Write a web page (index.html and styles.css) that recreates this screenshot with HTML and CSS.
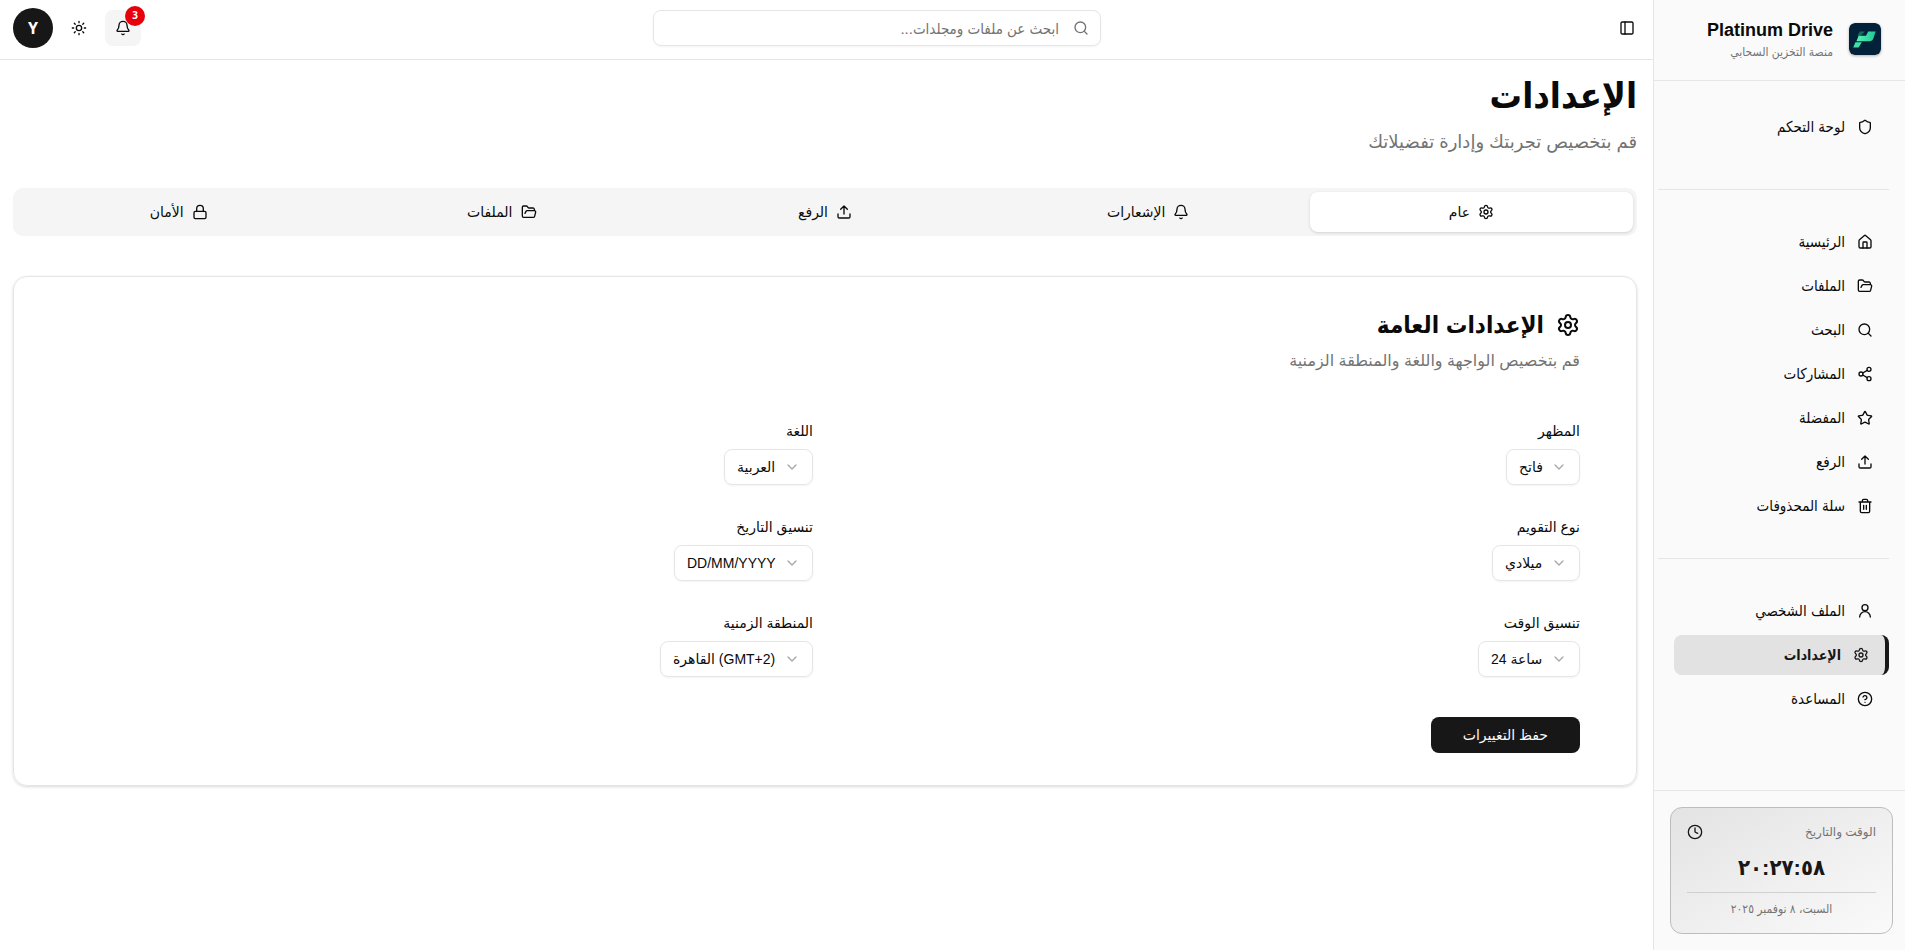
FILE: index.html
```html
<!DOCTYPE html>
<html lang="ar" dir="rtl">
  <head>
    <meta charset="UTF-8">
    <meta name="viewport" content="width=device-width, initial-scale=1.0">
    <title>Platinum Drive</title>
    <link rel="stylesheet" href="styles.css">
  </head>
  <body>
    <svg width="0" height="0" class="sprite">
      <symbol id="i-shield" viewBox="0 0 24 24"><path d="M20 13c0 5-3.500 7.500-7.660 8.950a1 1 0 0 1-.67-.01C7.500 20.500 4 18 4 13V6a1 1 0 0 1 1-1c2 0 4.500-1.200 6.240-2.720a1.170 1.170 0 0 1 1.520 0C14.510 3.810 17 5 19 5a1 1 0 0 1 1 1z"/></symbol>
      <symbol id="i-home" viewBox="0 0 24 24"><path d="M15 21v-8a1 1 0 0 0-1-1h-4a1 1 0 0 0-1 1v8"/><path d="M3 10a2 2 0 0 1 .709-1.528l7-5.999a2 2 0 0 1 2.582 0l7 5.999A2 2 0 0 1 21 10v9a2 2 0 0 1-2 2H5a2 2 0 0 1-2-2z"/></symbol>
      <symbol id="i-folder" viewBox="0 0 24 24"><path d="m6 14 1.500-2.900A2 2 0 0 1 9.240 10H20a2 2 0 0 1 1.940 2.500l-1.540 6a2 2 0 0 1-1.950 1.500H4a2 2 0 0 1-2-2V5a2 2 0 0 1 2-2h3.900a2 2 0 0 1 1.690.9l.81 1.200a2 2 0 0 0 1.670.9H18a2 2 0 0 1 2 2v2"/></symbol>
      <symbol id="i-search" viewBox="0 0 24 24"><circle cx="11" cy="11" r="8"/><path d="m21 21-4.340-4.340"/></symbol>
      <symbol id="i-share" viewBox="0 0 24 24"><circle cx="18" cy="5" r="3"/><circle cx="6" cy="12" r="3"/><circle cx="18" cy="19" r="3"/><path d="m8.590 13.510 6.830 3.980M15.410 6.510l-6.820 3.980"/></symbol>
      <symbol id="i-star" viewBox="0 0 24 24"><path d="M11.525 2.295a.53.53 0 0 1 .95 0l2.310 4.679a2.123 2.123 0 0 0 1.595 1.160l5.166.756a.53.53 0 0 1 .294.904l-3.736 3.638a2.123 2.123 0 0 0-.611 1.878l.882 5.140a.53.53 0 0 1-.771.560l-4.618-2.428a2.122 2.122 0 0 0-1.973 0L6.396 21.010a.53.53 0 0 1-.770-.560l.881-5.139a2.122 2.122 0 0 0-.611-1.879L2.160 9.795a.53.53 0 0 1 .294-.906l5.165-.755a2.122 2.122 0 0 0 1.597-1.160z"/></symbol>
      <symbol id="i-upload" viewBox="0 0 24 24"><path d="M12 3v12M17 8l-5-5-5 5M21 15v4a2 2 0 0 1-2 2H5a2 2 0 0 1-2-2v-4"/></symbol>
      <symbol id="i-trash" viewBox="0 0 24 24"><path d="M10 11v6M14 11v6M19 6v14a2 2 0 0 1-2 2H7a2 2 0 0 1-2-2V6M3 6h18M8 6V4a2 2 0 0 1 2-2h4a2 2 0 0 1 2 2v2"/></symbol>
      <symbol id="i-user" viewBox="0 0 24 24"><circle cx="12" cy="7" r="4.500"/><path d="M20 21a8 8 0 0 0-16 0"/></symbol>
      <symbol id="i-settings" viewBox="0 0 24 24"><path d="M9.671 4.136a2.340 2.340 0 0 1 4.659 0 2.340 2.340 0 0 0 3.319 1.915 2.340 2.340 0 0 1 2.330 4.033 2.340 2.340 0 0 0 0 3.831 2.340 2.340 0 0 1-2.330 4.033 2.340 2.340 0 0 0-3.319 1.915 2.340 2.340 0 0 1-4.659 0 2.340 2.340 0 0 0-3.320-1.915 2.340 2.340 0 0 1-2.330-4.033 2.340 2.340 0 0 0 0-3.831A2.340 2.340 0 0 1 6.350 6.051a2.340 2.340 0 0 0 3.319-1.915"/><circle cx="12" cy="12" r="3"/></symbol>
      <symbol id="i-help" viewBox="0 0 24 24"><circle cx="12" cy="12" r="10"/><path d="M9.090 9a3 3 0 0 1 5.830 1c0 2-3 3-3 3M12 17h.01"/></symbol>
      <symbol id="i-clock" viewBox="0 0 24 24"><circle cx="12" cy="12" r="10"/><path d="M12 6v6l4 2"/></symbol>
      <symbol id="i-bell" viewBox="0 0 24 24"><path d="M10.268 21a2 2 0 0 0 3.464 0M3.262 15.326A1 1 0 0 0 4 17h16a1 1 0 0 0 .740-1.673C19.410 13.956 18 12.499 18 8A6 6 0 0 0 6 8c0 4.499-1.411 5.956-2.738 7.326"/></symbol>
      <symbol id="i-sun" viewBox="0 0 24 24"><circle cx="12" cy="12" r="4"/><path d="M12 2v2M12 20v2M4.930 4.930l1.410 1.410M17.660 17.660l1.410 1.410M2 12h2M20 12h2M6.340 17.660l-1.410 1.410M19.070 4.930l-1.410 1.410"/></symbol>
      <symbol id="i-panel" viewBox="0 0 24 24"><rect x="3" y="3" width="18" height="18" rx="2"/><path d="M9 3v18"/></symbol>
      <symbol id="i-lock" viewBox="0 0 24 24"><rect x="3" y="11" width="18" height="11" rx="2"/><path d="M7 11V7a5 5 0 0 1 10 0v4"/></symbol>
      <symbol id="i-chevron" viewBox="0 0 24 24"><path d="m6 9 6 6 6-6"/></symbol>
    </svg>

    <div class="layout">
      <aside class="sidebar">
        <div class="brand">
          <svg class="logo" viewBox="0 0 30 30">
            <defs>
              <linearGradient id="g" x1="0" y1="0" x2="1" y2="0">
                <stop offset="0" stop-color="#5cf0b4"/>
                <stop offset="1" stop-color="#1fc796"/>
              </linearGradient>
            </defs>
            <rect width="30" height="30" rx="5" fill="#04213a"/>
            <path d="M10 8h5l-4 4H8z" fill="#12695f"/>
            <path d="M18 8h7l-2 6q-1 3-4 3H7l2-5h7z" fill="url(#g)"/>
            <path d="M6 18h6l-3 5H4z" fill="#3fe0a8"/>
          </svg>
          <div class="brand-text">
            <strong>Platinum Drive</strong>
            <span>منصة التخزين السحابي</span>
          </div>
        </div>

        <nav class="menu">
          <ul>
            <li><a href="#"><svg class="icon"><use href="#i-shield"/></svg>لوحة التحكم</a></li>
          </ul>
          <ul>
            <li><a href="#"><svg class="icon"><use href="#i-home"/></svg>الرئيسية</a></li>
            <li><a href="#"><svg class="icon"><use href="#i-folder"/></svg>الملفات</a></li>
            <li><a href="#"><svg class="icon"><use href="#i-search"/></svg>البحث</a></li>
            <li><a href="#"><svg class="icon"><use href="#i-share"/></svg>المشاركات</a></li>
            <li><a href="#"><svg class="icon"><use href="#i-star"/></svg>المفضلة</a></li>
            <li><a href="#"><svg class="icon"><use href="#i-upload"/></svg>الرفع</a></li>
            <li><a href="#"><svg class="icon"><use href="#i-trash"/></svg>سلة المحذوفات</a></li>
          </ul>
          <ul>
            <li><a href="#"><svg class="icon"><use href="#i-user"/></svg>الملف الشخصي</a></li>
            <li><a href="#" class="active"><svg class="icon"><use href="#i-settings"/></svg>الإعدادات</a></li>
            <li><a href="#"><svg class="icon"><use href="#i-help"/></svg>المساعدة</a></li>
          </ul>
        </nav>

        <div class="sidebar-footer">
          <div class="clock">
            <div class="clock-head">
              <span>الوقت والتاريخ</span>
              <svg class="icon"><use href="#i-clock"/></svg>
            </div>
            <div class="clock-time">٢٠:٢٧:٥٨</div>
            <div class="clock-date">السبت، ٨ نوفمبر ٢٠٢٥</div>
          </div>
        </div>
      </aside>

      <div class="page">
        <header class="topbar">
          <button class="icon-btn toggle" aria-label="القائمة"><svg class="icon"><use href="#i-panel"/></svg></button>
          <label class="search">
            <svg class="icon"><use href="#i-search"/></svg>
            <input type="text" placeholder="ابحث عن ملفات ومجلدات..." aria-label="البحث">
          </label>
          <div class="actions">
            <button class="icon-btn bell" aria-label="الإشعارات">
              <svg class="icon"><use href="#i-bell"/></svg>
              <span class="badge">3</span>
            </button>
            <button class="icon-btn" aria-label="المظهر"><svg class="icon"><use href="#i-sun"/></svg></button>
            <button class="avatar">Y</button>
          </div>
        </header>

        <main class="content">
          <h1>الإعدادات</h1>
          <p class="lead">قم بتخصيص تجربتك وإدارة تفضيلاتك</p>

          <div class="tabs" role="tablist">
            <button role="tab" class="selected" aria-selected="true"><svg class="icon"><use href="#i-settings"/></svg>عام</button>
            <button role="tab"><svg class="icon"><use href="#i-bell"/></svg>الإشعارات</button>
            <button role="tab"><svg class="icon"><use href="#i-upload"/></svg>الرفع</button>
            <button role="tab"><svg class="icon"><use href="#i-folder"/></svg>الملفات</button>
            <button role="tab"><svg class="icon"><use href="#i-lock"/></svg>الأمان</button>
          </div>

          <section class="card">
            <h2><svg class="icon"><use href="#i-settings"/></svg>الإعدادات العامة</h2>
            <p class="card-desc">قم بتخصيص الواجهة واللغة والمنطقة الزمنية</p>

            <form class="fields">
              <div class="field">
                <label for="theme">المظهر</label>
                <div class="select">
                  <select id="theme" dir="ltr"><option>فاتح</option></select>
                  <svg class="icon"><use href="#i-chevron"/></svg>
                </div>
              </div>
              <div class="field">
                <label for="lang">اللغة</label>
                <div class="select">
                  <select id="lang" dir="ltr"><option>العربية</option></select>
                  <svg class="icon"><use href="#i-chevron"/></svg>
                </div>
              </div>
              <div class="field">
                <label for="calendar">نوع التقويم</label>
                <div class="select">
                  <select id="calendar" dir="ltr"><option>ميلادي</option></select>
                  <svg class="icon"><use href="#i-chevron"/></svg>
                </div>
              </div>
              <div class="field">
                <label for="date-format">تنسيق التاريخ</label>
                <div class="select">
                  <select id="date-format" dir="ltr"><option>DD/MM/YYYY</option></select>
                  <svg class="icon"><use href="#i-chevron"/></svg>
                </div>
              </div>
              <div class="field">
                <label for="time-format">تنسيق الوقت</label>
                <div class="select">
                  <select id="time-format" dir="ltr"><option>24 ساعة</option></select>
                  <svg class="icon"><use href="#i-chevron"/></svg>
                </div>
              </div>
              <div class="field">
                <label for="timezone">المنطقة الزمنية</label>
                <div class="select">
                  <select id="timezone" dir="ltr"><option>القاهرة (GMT+2)</option></select>
                  <svg class="icon"><use href="#i-chevron"/></svg>
                </div>
              </div>
            </form>

            <button class="save">حفظ التغييرات</button>
          </section>
        </main>
      </div>
    </div>
  </body>
</html>
```

FILE: styles.css
```css
* {
  margin: 0;
  padding: 0;
  box-sizing: border-box;
}

body {
  font-family: "Liberation Sans", "DejaVu Sans", sans-serif;
  font-size: 14px;
  line-height: 20px;
  color: #0a0a0a;
  background-color: #fff;
}

button,
input,
select {
  font: inherit;
  color: inherit;
  border: none;
  background: none;
}

button {
  cursor: pointer;
}

a {
  color: inherit;
  text-decoration: none;
}

h1,
h2,
.brand,
.menu,
.clock-time,
.clock-date,
.search {
  font-family: "Liberation Sans", "DejaVu Sans Condensed", "DejaVu Sans", sans-serif;
}

.sprite {
  position: absolute;
}

.icon {
  width: 16px;
  height: 16px;
  flex-shrink: 0;
  fill: none;
  stroke: currentColor;
  stroke-width: 2;
  stroke-linecap: round;
  stroke-linejoin: round;
}

.layout {
  display: flex;
  min-height: 100vh;
}

/* sidebar */
.sidebar {
  width: 252px;
  flex-shrink: 0;
  display: flex;
  flex-direction: column;
  background-color: #fafafa;
  border-left: 1px solid #e5e5e5;
}

.brand {
  display: flex;
  align-items: center;
  gap: 16px;
  height: 81px;
  padding: 0 24px 2px;
  border-bottom: 1px solid #e5e5e5;
}

.logo {
  width: 32px;
  height: 32px;
  border-radius: 6px;
  box-shadow: 0 1px 3px rgba(0, 0, 0, 0.3);
}

.brand-text {
  display: flex;
  flex-direction: column;
  gap: 2px;
}

.brand-text strong {
  font-size: 18px;
  line-height: 24px;
}

.brand-text span {
  font-size: 12px;
  line-height: 16px;
  color: #737373;
}

.menu {
  flex: 1;
  padding: 0 16px 0 4px;
  font-size: 15px;
}

.menu ul {
  list-style: none;
  display: flex;
  flex-direction: column;
  gap: 4px;
  padding: 32px 0 42px 16px;
}

.menu ul:first-child {
  padding-top: 26px;
}

.menu ul + ul {
  position: relative;
  border-top: 1px solid #e5e5e5;
  padding-bottom: 32px;
}

/* dividers run past the items on the left side */
.menu ul {
  margin-left: 0;
}

.menu a {
  display: flex;
  align-items: center;
  gap: 12px;
  height: 40px;
  padding: 0 16px;
  border-radius: 8px;
}

.menu .active {
  background-color: #e2e2e2;
  border-right: 4px solid #171717;
  color: #171717;
  font-size: 14px;
  font-weight: bold;
}

.sidebar-footer {
  border-top: 1px solid #e5e5e5;
  padding: 16px 12px 16px 16px;
}

.clock {
  padding: 16px;
  border: 1px solid #bdbdbd;
  border-radius: 12px;
  background: linear-gradient(to bottom right, #e3e3e3, #fafafa);
}

.clock-head {
  display: flex;
  align-items: center;
  justify-content: space-between;
  height: 16px;
  font-size: 12px;
  color: #737373;
}

.clock-head .icon {
  color: #171717;
}

.clock-time {
  margin: 12px 0 8px;
  text-align: center;
  font-size: 22px;
  line-height: 32px;
  font-weight: bold;
  color: #171717;
}

.clock-date {
  border-top: 1px solid #d0d0d0;
  padding-top: 8px;
  text-align: center;
  font-size: 12px;
  line-height: 16px;
  color: #737373;
}

/* top bar */
.page {
  flex: 1;
  min-width: 0;
}

.topbar {
  display: flex;
  align-items: center;
  justify-content: space-between;
  height: 60px;
  padding: 0 12px 3px 13px;
  border-bottom: 1px solid #e5e5e5;
}

.icon-btn {
  display: flex;
  align-items: center;
  justify-content: center;
  width: 36px;
  height: 36px;
  border-radius: 8px;
}

.toggle {
  width: 28px;
  height: 28px;
}

.search {
  position: relative;
  width: 448px;
}

.search .icon {
  position: absolute;
  top: 10px;
  right: 12px;
  color: #737373;
}

.search input {
  width: 100%;
  height: 36px;
  padding: 0 41px 0 12px;
  border: 1px solid #e5e5e5;
  border-radius: 8px;
  box-shadow: 0 1px 2px rgba(0, 0, 0, 0.05);
  font-size: 15px;
}

.search input::placeholder {
  color: #737373;
  opacity: 1;
}

.actions {
  display: flex;
  align-items: center;
  gap: 8px;
}

.bell {
  position: relative;
  background-color: #f5f5f5;
}

.badge {
  position: absolute;
  top: -4px;
  right: -4px;
  width: 20px;
  height: 20px;
  border-radius: 50%;
  background-color: #e7000b;
  color: #fff;
  font-family: "Noto Sans", sans-serif;
  font-size: 10px;
  line-height: 18px;
  font-weight: bold;
}

.avatar {
  width: 40px;
  height: 40px;
  border-radius: 50%;
  background-color: #171717;
  color: #fff;
  font-family: "Noto Sans", sans-serif;
  font-size: 16px;
  font-weight: bold;
}

/* settings */
.content {
  padding: 16px 16px 16px 13px;
}

h1 {
  font-size: 36px;
  line-height: 40px;
}

.lead {
  margin-top: 12px;
  font-size: 18px;
  line-height: 28px;
  color: #737373;
}

.tabs {
  display: flex;
  margin-top: 32px;
  padding: 4px;
  border-radius: 10px;
  background-color: #f5f5f5;
}

.tabs button {
  flex: 1;
  display: flex;
  align-items: center;
  justify-content: center;
  gap: 8px;
  height: 40px;
  border-radius: 8px;
}

.tabs .selected {
  background-color: #fff;
  box-shadow: 0 1px 3px rgba(0, 0, 0, 0.15);
}

.card {
  margin-top: 40px;
  padding: 32px 56px;
  border: 1px solid #e5e5e5;
  border-radius: 14px;
  box-shadow: 0 1px 3px rgba(0, 0, 0, 0.15);
}

h2 {
  display: flex;
  align-items: center;
  gap: 12px;
  font-size: 24px;
  line-height: 32px;
}

h2 .icon {
  width: 24px;
  height: 24px;
}

.card-desc {
  margin-top: 8px;
  font-size: 16px;
  line-height: 24px;
  color: #737373;
}

.fields {
  display: grid;
  grid-template-columns: 1fr 1fr;
  gap: 32px 24px;
  margin-top: 48px;
}

.field {
  display: flex;
  flex-direction: column;
  align-items: flex-start;
  gap: 8px;
}

.select {
  position: relative;
}

.select select {
  appearance: none;
  height: 36px;
  padding: 0 36px 0 12px;
  border: 1px solid #e5e5e5;
  border-radius: 8px;
  box-shadow: 0 1px 2px rgba(0, 0, 0, 0.05);
}

.select .icon {
  position: absolute;
  top: 10px;
  right: 13px;
  opacity: 0.35;
  pointer-events: none;
}

.save {
  margin-top: 40px;
  height: 36px;
  padding: 0 32px;
  border-radius: 8px;
  background-color: #171717;
  color: #fafafa;
}
```
